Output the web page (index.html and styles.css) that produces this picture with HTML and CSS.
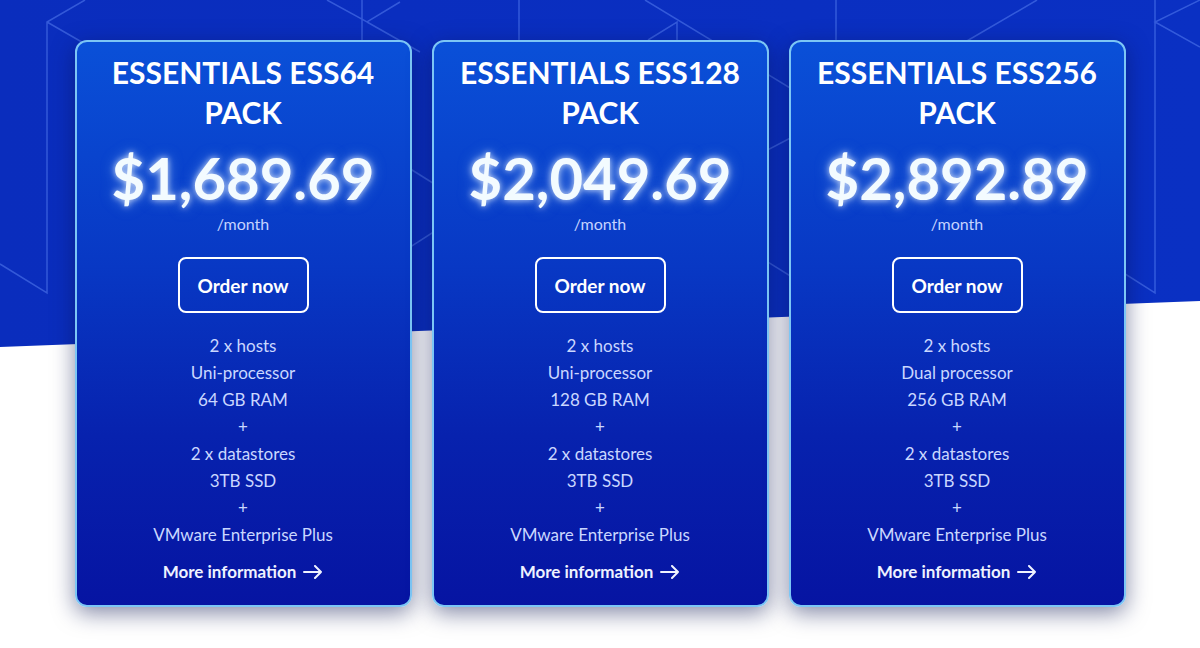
FILE: index.html
```html
<!DOCTYPE html>
<html lang="en">
<head>
<meta charset="utf-8">
<title>Essentials Packs</title>
<link rel="stylesheet" href="styles.css">
</head>
<body>
<div class="page">
  <div class="hero">
    <svg class="pattern" viewBox="0 0 1200 350" width="1200" height="350" preserveAspectRatio="none">
      <g fill="none" stroke="rgba(110,150,255,0.42)" stroke-width="1.5">
        <path d="M85,0 L47,22 L47,293 L0,264 M47,22 L120,64"/>
        <path d="M327,0 L367,22 L400,2 M367,22 L420,52 M362,0 L362,40"/>
        <path d="M519,0 L519,40"/>
        <path d="M645,0 L800,94"/>
        <path d="M648,40 L677,22 L677,40"/>
        <path d="M836,0 L836,40"/>
        <path d="M1037,0 L960,45"/>
        <path d="M1155,0 L1155,293 L1100,258 M1200,0 L1155,22 L1200,47"/>
        <path d="M380,150 L460,200"/>
        <path d="M390,260 L460,215"/>
        <path d="M720,175 L800,133"/>
        <path d="M700,220 L800,282"/>
      </g>
    </svg>
  </div>

  <div class="cards">
    <div class="card">
      <h2 class="title">ESSENTIALS ESS64<br>PACK</h2>
      <div class="price">$1,689.69</div>
      <div class="period">/month</div>
      <a class="order" href="#">Order now</a>
      <ul class="features">
        <li>2 x hosts</li>
        <li>Uni-processor</li>
        <li>64 GB RAM</li>
        <li>+</li>
        <li>2 x datastores</li>
        <li>3TB SSD</li>
        <li>+</li>
        <li>VMware Enterprise Plus</li>
      </ul>
      <a class="more" href="#">More information
        <svg class="arrow" viewBox="0 0 20 14" width="20" height="14"><path d="M1,7 H18 M12,1 L18,7 L12,13" fill="none" stroke="currentColor" stroke-width="2" stroke-linecap="round" stroke-linejoin="round"/></svg>
      </a>
    </div>

    <div class="card">
      <h2 class="title">ESSENTIALS ESS128<br>PACK</h2>
      <div class="price">$2,049.69</div>
      <div class="period">/month</div>
      <a class="order" href="#">Order now</a>
      <ul class="features">
        <li>2 x hosts</li>
        <li>Uni-processor</li>
        <li>128 GB RAM</li>
        <li>+</li>
        <li>2 x datastores</li>
        <li>3TB SSD</li>
        <li>+</li>
        <li>VMware Enterprise Plus</li>
      </ul>
      <a class="more" href="#">More information
        <svg class="arrow" viewBox="0 0 20 14" width="20" height="14"><path d="M1,7 H18 M12,1 L18,7 L12,13" fill="none" stroke="currentColor" stroke-width="2" stroke-linecap="round" stroke-linejoin="round"/></svg>
      </a>
    </div>

    <div class="card">
      <h2 class="title">ESSENTIALS ESS256<br>PACK</h2>
      <div class="price">$2,892.89</div>
      <div class="period">/month</div>
      <a class="order" href="#">Order now</a>
      <ul class="features">
        <li>2 x hosts</li>
        <li>Dual processor</li>
        <li>256 GB RAM</li>
        <li>+</li>
        <li>2 x datastores</li>
        <li>3TB SSD</li>
        <li>+</li>
        <li>VMware Enterprise Plus</li>
      </ul>
      <a class="more" href="#">More information
        <svg class="arrow" viewBox="0 0 20 14" width="20" height="14"><path d="M1,7 H18 M12,1 L18,7 L12,13" fill="none" stroke="currentColor" stroke-width="2" stroke-linecap="round" stroke-linejoin="round"/></svg>
      </a>
    </div>
  </div>
</div>
</body>
</html>
```

FILE: styles.css
```css
* { box-sizing: border-box; }

html, body {
  margin: 0;
  padding: 0;
  background: #ffffff;
}

body {
  font-family: "Lato", "Noto Sans", sans-serif;
  width: 1200px;
  height: 648px;
  overflow: hidden;
}

.page {
  position: relative;
  width: 1200px;
  height: 648px;
}

.hero {
  position: absolute;
  left: 0;
  top: 0;
  width: 1200px;
  height: 350px;
  background: linear-gradient(90deg, #0a2dbd 0%, #0a30c3 100%);
  clip-path: polygon(0 0, 100% 0, 100% 301px, 0 347px);
}

.pattern {
  display: block;
}

.cards {
  position: relative;
  display: flex;
  justify-content: center;
  gap: 20px;
  padding-top: 40px;
}

.card {
  width: 337px;
  height: 567px;
  border: 2px solid #7cc6f5;
  border-radius: 12px;
  background: linear-gradient(180deg, #0a50d8 0%, #0838c4 40%, #0722ae 70%, #0614a2 100%);
  box-shadow: 0 6px 22px rgba(10, 20, 80, 0.5);
  display: flex;
  flex-direction: column;
  align-items: center;
  padding-top: 10px;
  color: #ffffff;
  text-align: center;
}

.title {
  margin: 0;
  font-size: 30px;
  font-weight: 700;
  line-height: 40px;
  color: #ffffff;
}

.price {
  margin-top: 11px;
  font-size: 58px;
  font-weight: 700;
  line-height: 70px;
  color: #f3fbff;
  text-shadow: 0 0 6px rgba(255, 255, 255, 0.75), 0 0 14px rgba(150, 200, 255, 0.6);
}

.period {
  font-size: 16px;
  line-height: 22px;
  color: #c5d3ff;
}

.order {
  margin-top: 22px;
  width: 131px;
  height: 56px;
  border: 2px solid #ffffff;
  border-radius: 8px;
  display: flex;
  align-items: center;
  justify-content: center;
  font-size: 19px;
  font-weight: 700;
  color: #ffffff;
  text-decoration: none;
}

.features {
  list-style: none;
  margin: 19px 0 0;
  padding: 0;
  font-size: 17px;
  line-height: 27px;
  color: #cad7ff;
}

.more {
  margin-top: 12px;
  display: flex;
  align-items: center;
  gap: 7px;
  font-size: 17px;
  font-weight: 700;
  line-height: 24px;
  color: #eef2ff;
  text-decoration: none;
}

.arrow {
  display: block;
}
```
